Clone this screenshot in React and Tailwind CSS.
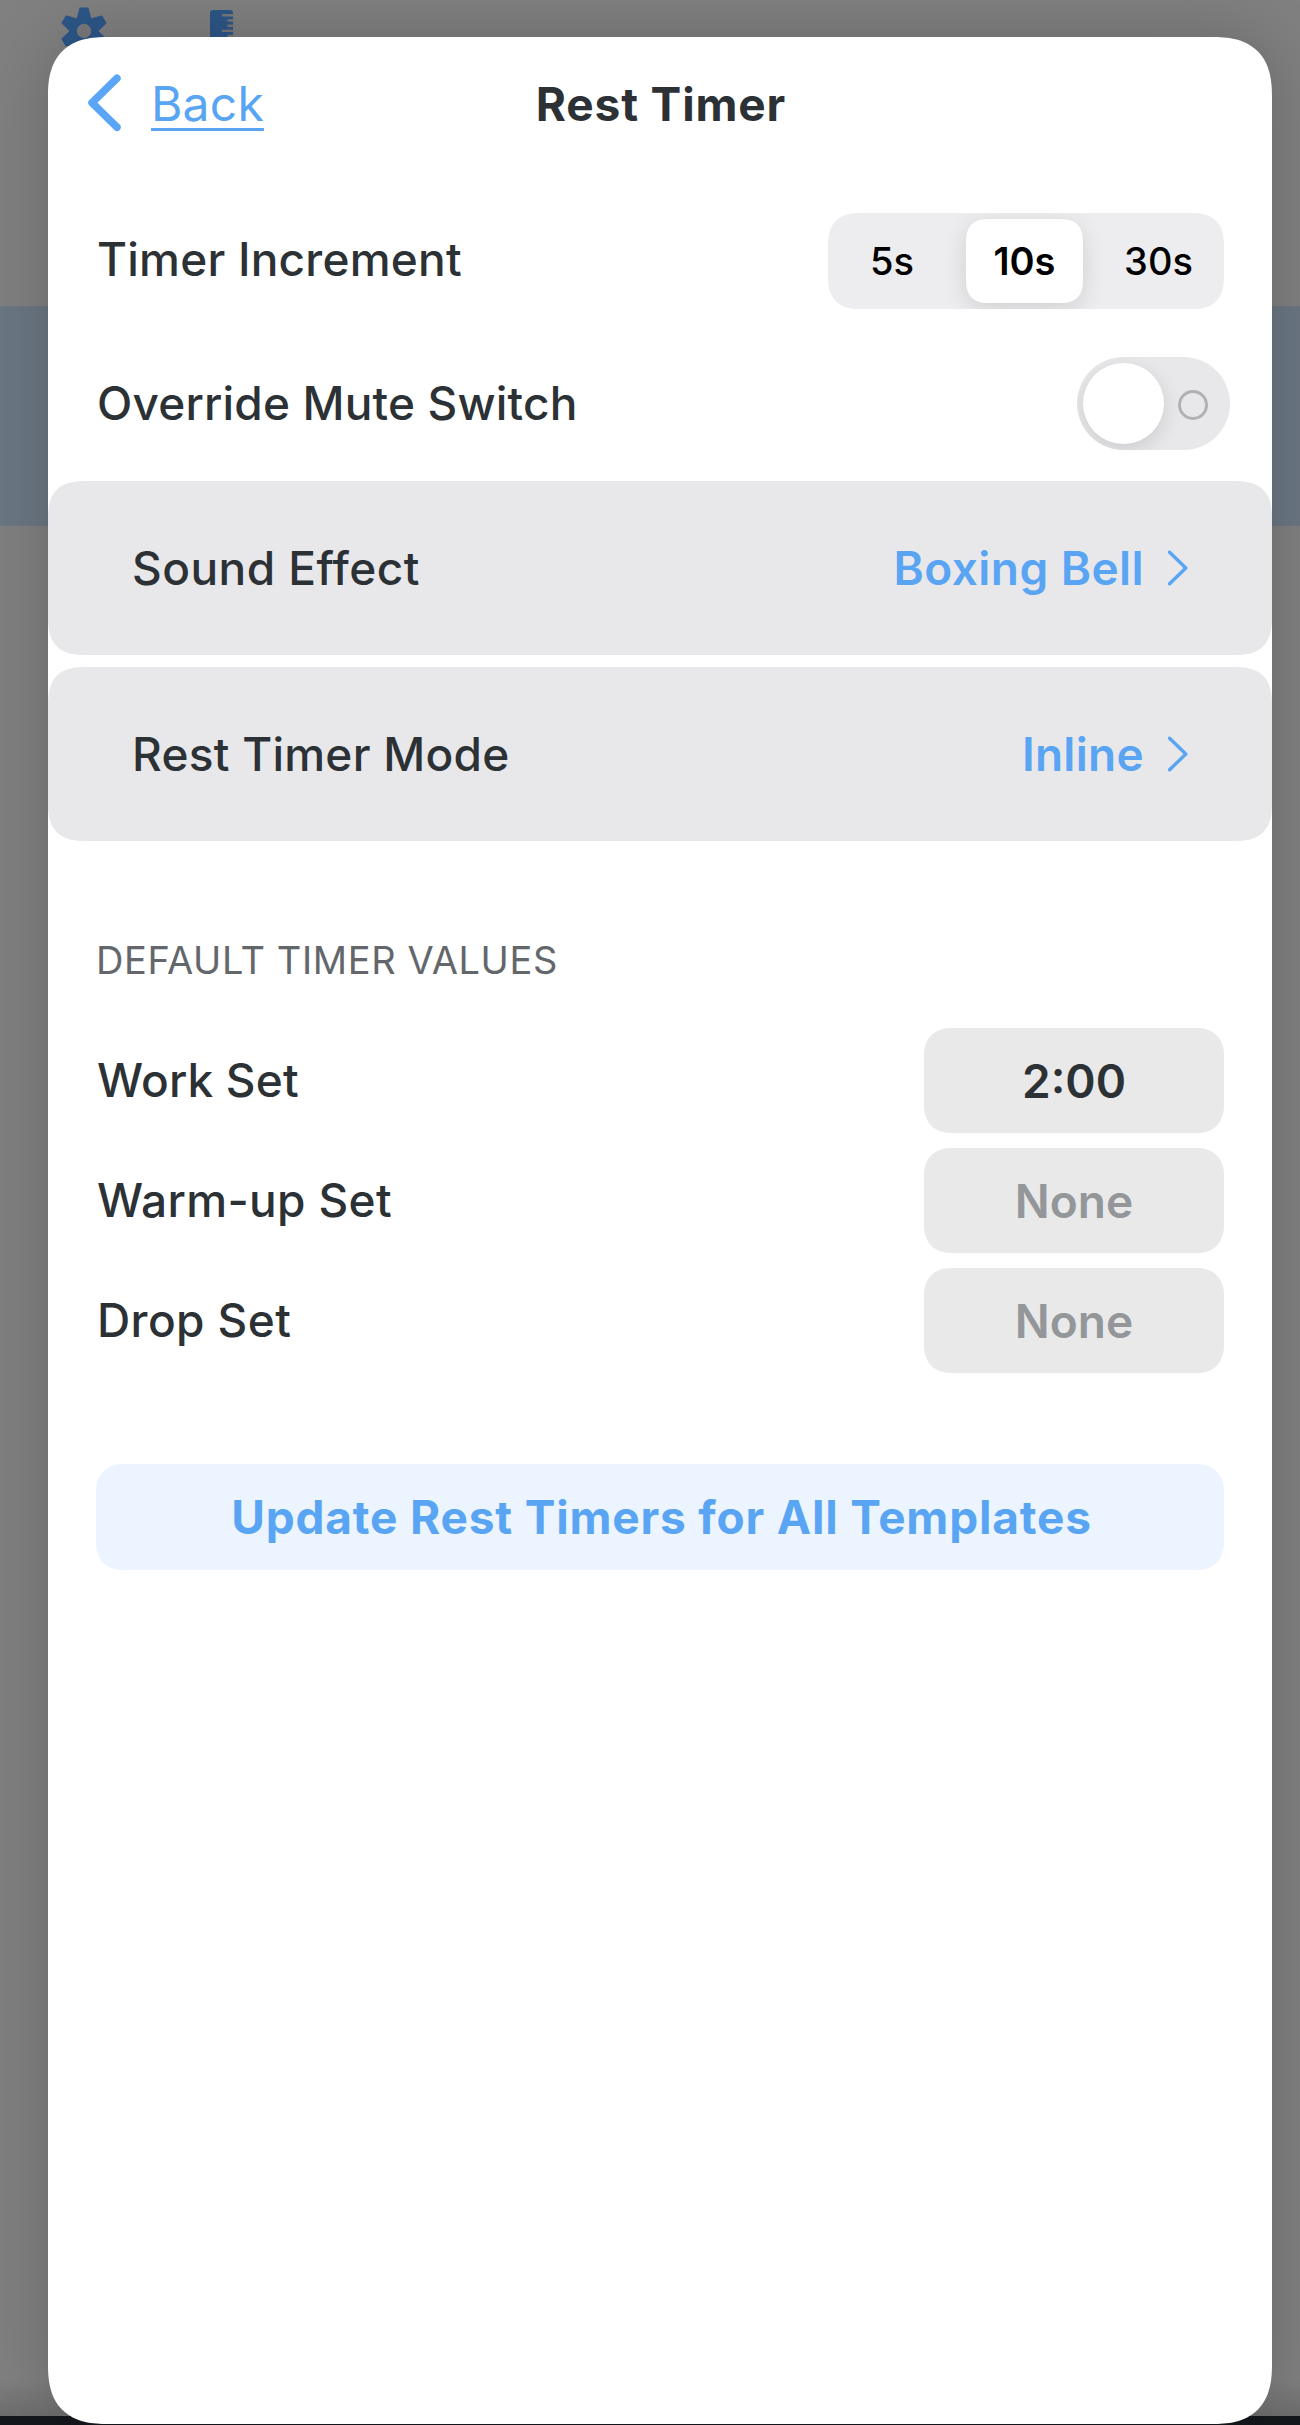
const teeth = [0, 60, 120, 180, 240, 300];

function Gear() {
  return (
    <svg width="50" height="50" viewBox="-25 -25 50 50" className="text-[#2d5788]">
      {teeth.map((a) => (
        <path
          key={a}
          d="M0 0L-6.6 -11.6L-3.8 -22.6H3.8L6.6 -11.6Z"
          transform={`rotate(${a})`}
          fill="currentColor"
          stroke="currentColor"
          strokeWidth="1.8"
          strokeLinejoin="round"
        />
      ))}
      <circle r="7.2" fill="#7a7a7b" />
    </svg>
  );
}

function Ruler() {
  return (
    <svg width="24" height="50" viewBox="0 0 24 50" fill="none" className="text-[#2d5788]">
      <path d="M3 0H20Q23 0 23 3V50H0V3Q0 0 3 0Z" fill="currentColor" />
      <path d="M12 5.3H24M17.500 10.500H24M17.500 15.700H24M12 20.900H24M17.500 26H24" stroke="#79797a" strokeWidth="2.400" />
    </svg>
  );
}

function ChevronRight() {
  return (
    <svg width="22" height="38" viewBox="0 0 22 38" fill="none" stroke="#5aa5f3" strokeWidth="3.400" strokeLinecap="round" strokeLinejoin="round">
      <path d="M3.600 3.200L19.800 19L3.600 34.800" />
    </svg>
  );
}

function LinkRow({ label, value, labelClass, valueClass }) {
  return (
    <button className="flex h-[174px] w-full items-center justify-between rounded-[38px] bg-[#e8e8ea] pr-[84px] pl-[84px] font-medium [corner-shape:superellipse(1.4)]">
      <span className={labelClass}>{label}</span>
      <span className="flex items-center gap-[22px]">
        <span className={`font-semibold text-[#5aa5f3] ${valueClass}`}>{value}</span>
        <ChevronRight />
      </span>
    </button>
  );
}

function ValueRow({ label, value, labelClass, valueClass }) {
  return (
    <div className="flex h-[105px] items-center justify-between">
      <span className={`pb-[2px] pl-[1px] ${labelClass}`}>{label}</span>
      <span
        className={`flex h-[105px] w-[300px] items-center justify-center rounded-[28px] bg-[#e9e9e9] font-semibold [corner-shape:superellipse(1.2)] ${valueClass}`}
      >
        {value}
      </span>
    </div>
  );
}

export default function App() {
  return (
    <div className="relative flow-root h-[2425px] w-[1300px] overflow-hidden bg-[#808080] font-['Inter',sans-serif] text-[46px] leading-[56px] text-[#2c3135]">
      <div className="absolute inset-0 flex flex-col">
        <div className="flex h-[306px] items-start gap-[101px] pt-[6px] pl-[59px]">
          <Gear />
          <div className="pt-[4px]">
            <Ruler />
          </div>
        </div>
        <div className="h-[220px] bg-[#6b7783]" />
        <div className="flex-1" />
        <div className="h-[36px] bg-gradient-to-b from-transparent to-black/15" />
        <div className="h-[9px] bg-[#14181c]" />
      </div>

      <main className="relative mt-[37px] ml-[48px] h-[2387px] w-[1224px] rounded-[60px] bg-white shadow-[0_0_70px_rgba(0,0,0,0.2)] [corner-shape:superellipse(1.35)]">
        <header className="grid h-[134px] grid-cols-3 items-center px-[40px]">
          <div className="flex items-center gap-[28px]">
            <svg width="35" height="60" viewBox="0 0 35 60" fill="none" stroke="#5aa5f6" strokeWidth="7.500" strokeLinecap="round" strokeLinejoin="round">
              <path d="M29 4.300L4 28.800L29 53.300" />
            </svg>
            <a className="text-[48px] tracking-[0.2px] text-[#5aa5f3] underline decoration-[3px] underline-offset-[7px]">Back</a>
          </div>
          <h1 className="pl-[2px] text-center font-bold tracking-[0.85px] whitespace-nowrap">Rest Timer</h1>
        </header>

        <section className="px-[48px] pt-[42px] font-medium">
          <div className="flex h-[96px] items-center justify-between">
            <span className="pb-[4px] pl-[1px] tracking-[0.23px]">Timer Increment</span>
            <div className="flex h-[96px] w-[396px] items-center overflow-hidden rounded-[34px] bg-[#ededef] text-[38px] text-black [corner-shape:superellipse(1.4)]">
              <span className="w-[138px] pr-[10px] text-center">5s</span>
              <span className="flex h-[84px] w-[117px] items-center justify-center rounded-[24px] bg-white font-semibold shadow-[0_6px_24px_rgba(0,0,0,0.12)] [corner-shape:superellipse(1.4)]">
                10s
              </span>
              <span className="flex-1 pl-[10px] text-center">30s</span>
            </div>
          </div>
          <div className="mt-[48px] flex h-[93px] items-center justify-between">
            <span className="pb-[1px] pl-[1px] tracking-[0.18px]">Override Mute Switch</span>
            <div className="-mr-[6px] flex h-[93px] w-[153px] items-center gap-[14px] overflow-hidden rounded-full bg-[#e8e8ea] pl-[6px]">
              <div className="h-[81px] w-[81px] rounded-full bg-white shadow-[0_6px_20px_rgba(0,0,0,0.12)]" />
              <div className="mt-[3px] h-[30px] w-[30px] rounded-full border-[3px] border-[#b1b1b2]" />
            </div>
          </div>
        </section>

        <section className="mt-[31px] flex flex-col gap-[12px]">
          <LinkRow label="Sound Effect" value="Boxing Bell" labelClass="tracking-[0.45px]" valueClass="tracking-[0.44px]" />
          <LinkRow label="Rest Timer Mode" value="Inline" labelClass="tracking-[0.25px]" valueClass="tracking-[0.3px]" />
        </section>

        <section className="mt-[91px] px-[48px] font-medium">
          <h2 className="text-[38px] leading-[56px] font-normal tracking-[0.6px] text-[#63676b]">DEFAULT TIMER VALUES</h2>
          <div className="mt-[40px] flex flex-col gap-[15px]">
            <ValueRow label="Work Set" value="2:00" labelClass="tracking-[0.15px]" valueClass="text-[#2c3135]" />
            <ValueRow label="Warm-up Set" value="None" labelClass="tracking-[0.35px]" valueClass="text-[#949799]" />
            <ValueRow label="Drop Set" value="None" labelClass="tracking-[0.4px]" valueClass="text-[#949799]" />
          </div>
          <button className="mt-[91px] flex h-[106px] w-full items-center justify-center rounded-[28px] bg-[#ecf5ff] pl-[3px] font-bold tracking-[0.82px] text-[#5aa5f3] [corner-shape:superellipse(1.2)]">
            Update Rest Timers for All Templates
          </button>
        </section>
      </main>
    </div>
  );
}
